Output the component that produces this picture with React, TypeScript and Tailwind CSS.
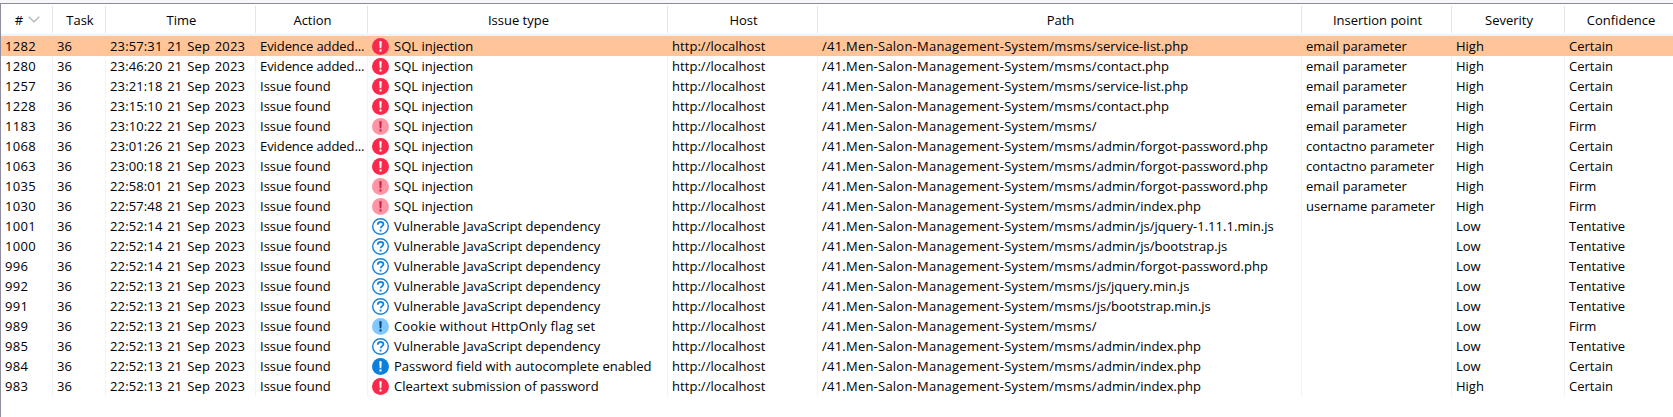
type Mark = "high" | "highFirm" | "low" | "lowFirm" | "tentative";

type Issue = [
  id: string, time: string, action: string, mark: Mark, type: string,
  path: string, insertion: string, severity: string, confidence: string,
];

const BASE = "/41.Men-Salon-Management-System/msms/";
const SQL = "SQL injection";
const VULN = "Vulnerable JavaScript dependency";
const COOKIE = "Cookie without HttpOnly flag set";

const issues: Issue[] = [
  ["1282", "23:57:31", "Evidence added...", "high", SQL, "service-list.php", "email parameter", "High", "Certain"],
  ["1280", "23:46:20", "Evidence added...", "high", SQL, "contact.php", "email parameter", "High", "Certain"],
  ["1257", "23:21:18", "Issue found", "high", SQL, "service-list.php", "email parameter", "High", "Certain"],
  ["1228", "23:15:10", "Issue found", "high", SQL, "contact.php", "email parameter", "High", "Certain"],
  ["1183", "23:10:22", "Issue found", "highFirm", SQL, "", "email parameter", "High", "Firm"],
  ["1068", "23:01:26", "Evidence added...", "high", SQL, "admin/forgot-password.php", "contactno parameter", "High", "Certain"],
  ["1063", "23:00:18", "Issue found", "high", SQL, "admin/forgot-password.php", "contactno parameter", "High", "Certain"],
  ["1035", "22:58:01", "Issue found", "highFirm", SQL, "admin/forgot-password.php", "email parameter", "High", "Firm"],
  ["1030", "22:57:48", "Issue found", "highFirm", SQL, "admin/index.php", "username parameter", "High", "Firm"],
  ["1001", "22:52:14", "Issue found", "tentative", VULN, "admin/js/jquery-1.11.1.min.js", "", "Low", "Tentative"],
  ["1000", "22:52:14", "Issue found", "tentative", VULN, "admin/js/bootstrap.js", "", "Low", "Tentative"],
  ["996", "22:52:14", "Issue found", "tentative", VULN, "admin/forgot-password.php", "", "Low", "Tentative"],
  ["992", "22:52:13", "Issue found", "tentative", VULN, "js/jquery.min.js", "", "Low", "Tentative"],
  ["991", "22:52:13", "Issue found", "tentative", VULN, "js/bootstrap.min.js", "", "Low", "Tentative"],
  ["989", "22:52:13", "Issue found", "lowFirm", COOKIE, "", "", "Low", "Firm"],
  ["985", "22:52:13", "Issue found", "tentative", VULN, "admin/index.php", "", "Low", "Tentative"],
  ["984", "22:52:13", "Issue found", "low", "Password field with autocomplete enabled", "admin/index.php", "", "Low", "Certain"],
  ["983", "22:52:13", "Issue found", "high", "Cleartext submission of password", "admin/index.php", "", "High", "Certain"],
];

const fills: Record<Mark, [string, string]> = {
  high: ["#f9294b", "#ffffff"],
  highFirm: ["#ff94a5", "#c41f45"],
  low: ["#0a80dc", "#ffffff"],
  lowFirm: ["#80c8ff", "#123c68"],
  tentative: ["#ffffff", "#1683d9"],
};

function IssueIcon({ mark }: { mark: Mark }) {
  const [disc, glyph] = fills[mark];
  return (
    <svg width="17" height="17" viewBox="0 0 17 17" className="mr-[5px] shrink-0">
      {mark === "tentative" ? (
        <>
          <circle cx="8.5" cy="8.5" r="7.8" fill={disc} stroke={glyph} strokeWidth="1.4" />
          <path d="M5.7 6.7C5.8 4.9 7 4 8.6 4s2.8.9 2.8 2.3c0 1.8-2.8 2-2.8 4" fill="none" stroke={glyph} strokeWidth="1.8" />
          <rect x="7.6" y="11.6" width="1.9" height="1.9" fill={glyph} />
        </>
      ) : (
        <>
          <circle cx="8.5" cy="8.5" r="8.5" fill={disc} />
          <path d="M7.3 3.3h2.4l-.4 7H7.7z" fill={glyph} />
          <rect x="7.5" y="11.4" width="2" height="2.1" fill={glyph} />
        </>
      )}
    </svg>
  );
}

const grid = "grid grid-cols-[52px_53px_150px_112px_300px_150px_484px_150px_113px_1fr]";
const headers = ["#", "Task", "Time", "Action", "Issue type", "Host", "Path", "Insertion point", "Severity", "Confidence"];
const cell = "flex items-center overflow-hidden border-r pl-1 last:border-r-0";

export default function App() {
  return (
    <div className="h-[417px] w-[1673px] overflow-hidden bg-[#f7f7fa] pt-[3px] font-['Open_Sans',sans-serif] text-[13px] leading-5 whitespace-nowrap text-black">
      <div className="h-full border-t border-l border-[#8f8c9c] bg-white">
        <div className={`${grid} h-8 border-b-2 border-[#f0f2f4] pt-0.5 pb-px`}>
          {headers.map((h) => (
            <div key={h} className="flex items-center justify-center border-r border-[#e4e4e4] pl-0.5 last:border-r-0 last:pl-1">
              {h}
              {h === "#" && (
                <svg width="12" height="7" viewBox="0 0 12 7" className="ml-[5px]">
                  <path d="M.7.7 6 5.8 11.3.7" fill="none" stroke="#b4b4b4" strokeWidth="1.2" />
                </svg>
              )}
            </div>
          ))}
        </div>
        {issues.map(([id, time, action, mark, type, path, insertion, severity, confidence], i) => {
          const c = `${cell} ${i === 0 ? "border-[#ffc599]" : "border-[#f3f3f3]"}`;
          return (
            <div key={id} className={`${grid} h-5 ${i === 0 ? "bg-[#ffc599]" : ""}`}>
              <div className={`${c} tracking-[0.3px]`}>{id}</div>
              <div className={c}>36</div>
              <div className={`${c} tracking-[0.13px] [word-spacing:1.3px]`}>{time} 21 Sep 2023</div>
              <div className={`${c} ${action === "Issue found" ? "" : "tracking-[-0.08px]"}`}>{action}</div>
              <div className={`${c} ${type === COOKIE ? "tracking-[0.17px]" : type === VULN ? "tracking-[0.02px]" : ""}`}>
                <IssueIcon mark={mark} />
                {type}
              </div>
              <div className={`${c} tracking-[0.05px]`}>http://localhost</div>
              <div className={c}>
                <span className="tracking-[0.23px]">{BASE}</span>
                <span className="tracking-[0.03px]">{path}</span>
              </div>
              <div className={c}>{insertion}</div>
              <div className={c}>{severity}</div>
              <div className={c}>{confidence}</div>
            </div>
          );
        })}
      </div>
    </div>
  );
}
